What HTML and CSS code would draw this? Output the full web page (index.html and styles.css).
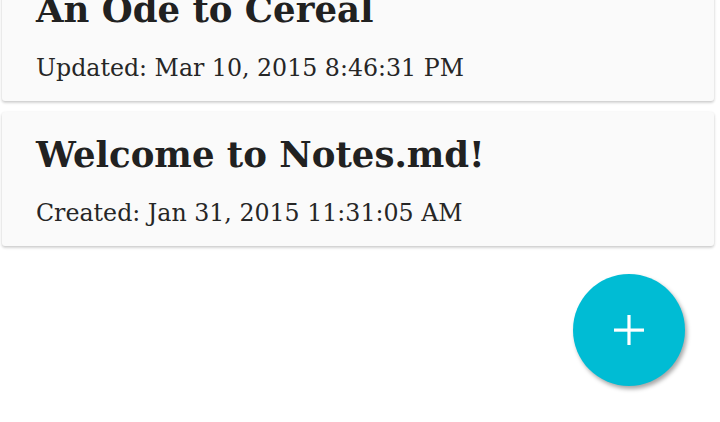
FILE: index.html
```html
<!DOCTYPE html>
<html lang="en">
<head>
<meta charset="utf-8">
<title>Notes.md</title>
<link rel="stylesheet" href="styles.css">
</head>
<body>
<main class="notes">
  <article class="card card-first">
    <h2 class="card-title">An Ode to Cereal</h2>
    <p class="card-date">Updated: Mar 10, 2015 8:46:31 PM</p>
  </article>
  <article class="card">
    <h2 class="card-title">Welcome to Notes.md!</h2>
    <p class="card-date">Created: Jan 31, 2015 11:31:05 AM</p>
  </article>
</main>
<button class="fab" aria-label="Add note">
  <svg width="30" height="30" viewBox="0 0 30 30" aria-hidden="true">
    <rect x="0" y="13.5" width="30" height="3.2" fill="#fff"/>
    <rect x="13.4" y="0" width="3.2" height="30" fill="#fff"/>
  </svg>
</button>
</body>
</html>
```
FILE: styles.css
```css
html, body {
  margin: 0;
  padding: 0;
  background: #ffffff;
  height: 100%;
  overflow: hidden;
}
body {
  font-family: "DejaVu Serif", "Liberation Serif", serif;
  color: #212121;
}
.notes {
  display: flex;
  flex-direction: column;
  gap: 11px;
  padding: 0 6px 0 2px;
  margin-top: -33px;
}
.card {
  background: #fafafa;
  border-radius: 3px;
  box-shadow: 0 1px 3px rgba(0,0,0,0.14), 0 2px 3px rgba(0,0,0,0.10);
  padding: 0 20px 0 34px;
  height: 134px;
  box-sizing: border-box;
  display: flex;
  flex-direction: column;
}
.card-title {
  margin: 0;
  font-size: 35.5px;
  font-weight: bold;
  line-height: 40px;
  padding-top: 23px;
  white-space: nowrap;
}
.card-date {
  margin: 0;
  font-size: 23.7px;
  line-height: 30px;
  padding-top: 23px;
  white-space: nowrap;
  color: #262626;
}
.fab {
  position: fixed;
  right: 35px;
  bottom: 36px;
  width: 112px;
  height: 112px;
  border-radius: 50%;
  border: 0;
  padding: 0;
  background: #00bcd4;
  box-shadow: 2px 3px 4px rgba(0,0,0,0.35);
  display: flex;
  align-items: center;
  justify-content: center;
}
.fab svg {
  display: block;
}
```
